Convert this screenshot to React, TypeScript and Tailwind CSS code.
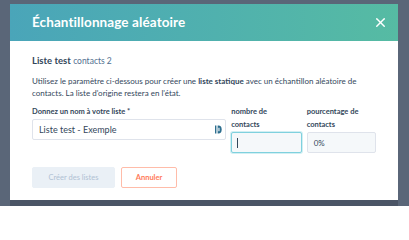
import { X } from "lucide-react";

function FillIcon() {
  return (
    <svg width="7" height="9" viewBox="0 0 7 9" className="shrink-0">
      <rect x="0" y="0.5" width="1.4" height="8" fill="#2d6e8e" />
      <path d="M2.6 0.5 H3.4 A3.3 4 0 0 1 3.4 8.5 H2.6 Z" fill="#2d6e8e" />
      <rect x="3.4" y="2.8" width="1.1" height="3.4" fill="#ffffff" />
    </svg>
  );
}

export default function App() {
  return (
    <div
      className="w-[409px] h-[206px] overflow-hidden bg-[#5a6678] pt-[4px] pl-[10px]"
      style={{ fontFamily: "Lato, 'Noto Sans', sans-serif" }}
    >
      <div className="w-[388px] h-[196px] bg-white flex flex-col shadow-[0_6px_0_#4b5566]">
        {/* Header */}
        <div className="h-[37px] shrink-0 flex items-center justify-between pl-[22px] pr-[10px] bg-gradient-to-r from-[#4aa5b9] to-[#56bba3]">
          <h1 className="text-white text-[13.5px] font-bold tracking-[0.1px]">Échantillonnage aléatoire</h1>
          <X className="w-[15px] h-[15px] text-white" strokeWidth={2.2} />
        </div>

        {/* Body */}
        <div className="flex flex-col px-[22px] pt-[14px] text-[#33475b]">
          <p className="text-[9.5px] leading-[12px]">
            <span className="font-bold">Liste test</span>{" "}
            <span className="text-[8.5px] text-[#516f90]">contacts 2</span>
          </p>

          <p className="mt-[9px] text-[8px] leading-[11.5px] text-[#33475b]">
            Utilisez le paramètre ci-dessous pour créer une <b>liste statique</b> avec un échantillon aléatoire de contacts. La liste d'origine restera en l'état.
          </p>

          <div className="mt-[7px] flex gap-[5px]">
            <div className="w-[196px] flex flex-col">
              <label className="text-[7.5px] font-bold leading-[12px] h-[12px]">Donnez un nom à votre liste *</label>
              <div className="mt-[1px] h-[21px] border border-[#dfe3eb] rounded-[2px] bg-white flex items-center justify-between pl-[6px] pr-[3px]">
                <span className="text-[9px]">Liste test - Exemple</span>
                <FillIcon />
              </div>
            </div>

            <div className="w-[71px] flex flex-col">
              <label className="text-[7.5px] font-bold leading-[12.5px]">
                nombre de
                <br />
                contacts
              </label>
              <div className="mt-[1px] h-[21px] border border-[#7fd1de] rounded-[2px] bg-[#f5f8fa] flex items-center pl-[5px] shadow-[0_0_0_1px_rgba(127,209,222,0.35)]">
                <span className="w-px h-[10px] bg-[#33475b]" />
              </div>
            </div>

            <div className="w-[70px] flex flex-col">
              <label className="text-[7.5px] font-bold leading-[12.5px]">
                pourcentage de
                <br />
                contacts
              </label>
              <div className="mt-[1px] h-[21px] border border-[#dfe3eb] rounded-[2px] bg-[#f5f8fa] flex items-center pl-[6px]">
                <span className="text-[8px]">0%</span>
              </div>
            </div>
          </div>

          <div className="mt-[14px] flex gap-[6px]">
            <div className="w-[83px] h-[21px] rounded-[2px] bg-[#eaf0f6] border border-[#eaf0f6] flex items-center justify-center text-[7.5px] text-[#b0c1d4]">
              Créer des listes
            </div>
            <div className="w-[56px] h-[21px] rounded-[2px] bg-white border border-[#ffbca9] flex items-center justify-center text-[7.5px] font-bold text-[#ff7a59]">
              Annuler
            </div>
          </div>
        </div>
      </div>
    </div>
  );
}
